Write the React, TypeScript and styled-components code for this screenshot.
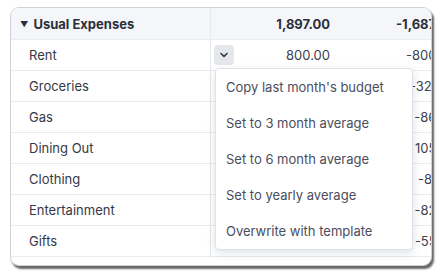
import React, { useState } from 'react';
import styled, { createGlobalStyle } from 'styled-components';

interface BudgetRow {
  name: string;
  budgeted: string;
  spent: string;
}

// budgeted values under the open menu are hidden by it, so they stay blank here
const rows: BudgetRow[] = [
  { name: 'Rent', budgeted: '800.00', spent: '-800.00' },
  { name: 'Groceries', budgeted: '', spent: '-322.14' },
  { name: 'Gas', budgeted: '', spent: '-86.45' },
  { name: 'Dining Out', budgeted: '', spent: '105.20' },
  { name: 'Clothing', budgeted: '', spent: '-84.10' },
  { name: 'Entertainment', budgeted: '', spent: '-82.33' },
  { name: 'Gifts', budgeted: '', spent: '-55.60' }
];

const menuItems = [
  "Copy last month's budget",
  'Set to 3 month average',
  'Set to 6 month average',
  'Set to yearly average',
  'Overwrite with template'
];

const App: React.FC = () => {
  const [menuOpen, setMenuOpen] = useState(true);

  return (
    <Page>
      <GlobalStyle />
      <Card>
        <HeaderRow>
          <GroupName>
            <Caret>▼</Caret>
            Usual Expenses
          </GroupName>
          <Amount bold>1,897.00</Amount>
          <Amount bold>-1,687.00</Amount>
        </HeaderRow>

        {rows.map((row, i) => (
          <Row key={row.name}>
            <CategoryName>{row.name}</CategoryName>
            <BudgetCell>
              {i === 0 && (
                <MenuButton onClick={() => setMenuOpen(!menuOpen)} aria-label="Budget actions">
                  <svg width="8" height="6" viewBox="0 0 8 6">
                    <path d="M1 1.5 L4 4.5 L7 1.5" fill="none" stroke="#2a3650" strokeWidth="1.6" strokeLinecap="round" strokeLinejoin="round" />
                  </svg>
                </MenuButton>
              )}
              {i === 0 && menuOpen && (
                <Menu>
                  {menuItems.map(item => (
                    <MenuItem key={item}>{item}</MenuItem>
                  ))}
                </Menu>
              )}
              <Amount>{row.budgeted}</Amount>
            </BudgetCell>
            <Amount>{row.spent}</Amount>
          </Row>
        ))}
        <Row />
      </Card>
    </Page>
  );
};

const GlobalStyle = createGlobalStyle`
  body {
    margin: 0;
    background: #ffffff;
    font-family: Inter, "Noto Sans", sans-serif;
  }
`;

const Page = styled.div`
  padding: 7px 0 0 10px;
  width: 441px;
  height: 276px;
  box-sizing: border-box;
`;

const Card = styled.div`
  width: 422px;
  height: 259px;
  box-sizing: border-box;
  border: 1px solid #cdd1d8;
  border-radius: 9px;
  overflow: hidden;
  background: #ffffff;
  box-shadow: 2px 3px 2px rgba(0, 0, 0, 0.6);
`;

const RowBase = styled.div`
  display: grid;
  grid-template-columns: 200px 129px 126px;
  align-items: center;
  width: 455px;
  box-sizing: border-box;
  border-bottom: 1px solid #e8ebf0;
  font-size: 13px;
  color: #353845;

  & > * {
    height: 100%;
    display: flex;
    align-items: center;
  }

  & > *:first-child {
    border-right: 1px solid #e5e8ee;
  }
`;

const HeaderRow = styled(RowBase)`
  height: 32px;
  background: #f5f6f9;
`;

const Row = styled(RowBase)`
  height: 31px;
`;

const GroupName = styled.div`
  padding-left: 9px;
  font-weight: 700;
  color: #2c2f3a;
`;

const Caret = styled.span`
  font-size: 8px;
  margin-right: 5px;
  color: #2c2f3a;
`;

const CategoryName = styled.div`
  padding-left: 18px;
`;

const BudgetCell = styled.div`
  position: relative;
  justify-content: flex-end;
`;

const Amount = styled.div<{ bold?: boolean }>`
  justify-content: flex-end;
  padding-right: 10px;
  font-weight: ${({ bold }) => (bold ? 700 : 400)};
  color: ${({ bold }) => (bold ? '#2c2f3a' : '#3d4150')};
  white-space: nowrap;
`;

const MenuButton = styled.button`
  position: absolute;
  left: 3px;
  top: 5px;
  width: 20px;
  height: 20px;
  padding: 0;
  border: none;
  border-radius: 4px;
  background: #e5e7eb;
  display: flex;
  align-items: center;
  justify-content: center;
  cursor: pointer;
`;

const Menu = styled.div`
  position: absolute;
  left: 4px;
  top: 28px;
  width: 196px;
  z-index: 2;
  background: #ffffff;
  border: 1px solid #dde2ea;
  border-radius: 4px;
  box-shadow: 0 3px 10px rgba(30, 40, 60, 0.14);
  display: flex;
  flex-direction: column;
`;

const MenuItem = styled.div`
  height: 36px;
  display: flex;
  align-items: center;
  padding-left: 10px;
  font-size: 13px;
  color: #4a4e5c;
  white-space: nowrap;
  cursor: pointer;
`;

export default App;
